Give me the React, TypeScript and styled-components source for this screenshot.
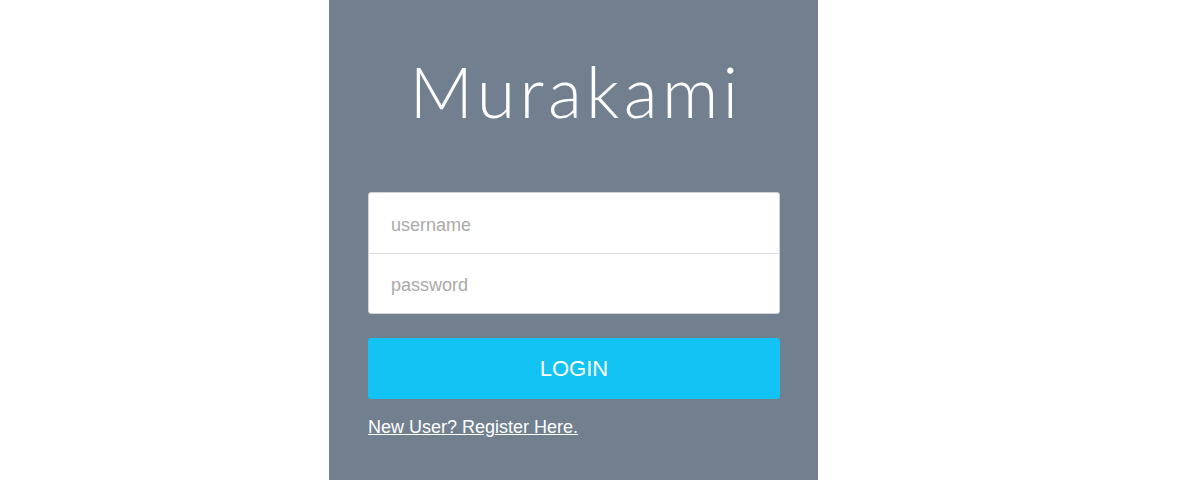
import React from "react";
import styled, { createGlobalStyle } from "styled-components";

const Global = createGlobalStyle`
  html, body { margin: 0; padding: 0; background: #ffffff; }
  * { box-sizing: border-box; }
`;

const Page = styled.div`
  display: flex;
  height: 480px;
  padding-left: 329px;
  overflow: hidden;
`;

const Panel = styled.div`
  width: 489px;
  background: #717f8f;
  padding: 56px 38px 0 39px;
  display: flex;
  flex-direction: column;
`;

const Title = styled.h1`
  margin: 0;
  padding-left: 4px;
  font-family: Lato, "Open Sans", sans-serif;
  font-weight: 300;
  font-size: 70px;
  line-height: 70px;
  height: 70px;
  letter-spacing: 4.3px;
  color: #ffffff;
  text-align: center;
`;

const FieldGroup = styled.div`
  margin-top: 66px;
  background: #ffffff;
  border: 1px solid #cfd3d7;
  border-radius: 3px;
  display: flex;
  flex-direction: column;
`;

const Field = styled.input<{ $divided?: boolean }>`
  height: 60px;
  border: none;
  border-top: ${(p) => (p.$divided ? "1px solid #dcdcdc" : "none")};
  background: transparent;
  padding: 4px 0 0 22px;
  font-family: "Liberation Sans", Arial, sans-serif;
  font-size: 18px;
  color: #333;
  outline: none;
  &::placeholder { color: #aaaaaa; }
`;

const LoginButton = styled.button`
  margin-top: 24px;
  height: 61px;
  border: none;
  border-radius: 3px;
  background: #12c3f4;
  color: #ffffff;
  font-family: "Liberation Sans", Arial, sans-serif;
  font-size: 22px;
  cursor: pointer;
`;

const RegisterLink = styled.a`
  margin-top: 18px;
  align-self: flex-start;
  font-family: "Liberation Sans", Arial, sans-serif;
  font-size: 18px;
  color: #ffffff;
  text-decoration: underline;
  cursor: pointer;
`;

export default function App() {
  return (
    <>
      <Global />
      <Page>
        <Panel>
          <Title>Murakami</Title>
          <FieldGroup>
            <Field type="text" placeholder="username" />
            <Field type="password" placeholder="password" $divided />
          </FieldGroup>
          <LoginButton>LOGIN</LoginButton>
          <RegisterLink href="#">New User? Register Here.</RegisterLink>
        </Panel>
      </Page>
    </>
  );
}
